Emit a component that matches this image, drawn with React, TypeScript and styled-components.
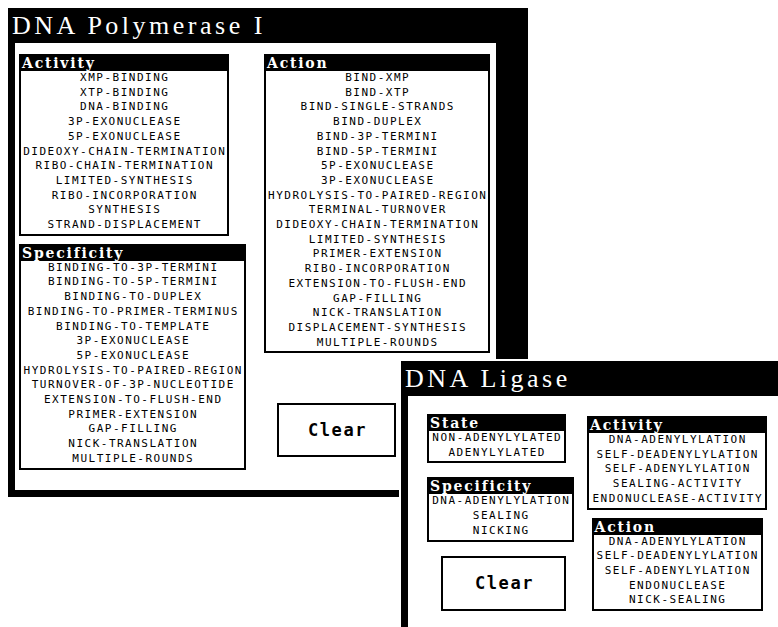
import styled, { createGlobalStyle } from 'styled-components';

const GlobalStyle = createGlobalStyle`
  html, body {
    margin: 0;
    padding: 0;
    background: #fff;
  }
`;

const Desktop = styled.div`
  position: relative;
  width: 778px;
  height: 627px;
  overflow: hidden;
  background: #fff;
`;

const Window = styled.div<{ $left: number; $top: number; $width: number; $height: number; $framed?: boolean }>`
  position: absolute;
  left: ${(p) => p.$left}px;
  top: ${(p) => p.$top}px;
  width: ${(p) => p.$width}px;
  height: ${(p) => p.$height}px;
  display: flex;
  flex-direction: column;
  background: #000;
  border: ${(p) => (p.$framed ? '2px solid #fff' : 'none')};
`;

const TitleBar = styled.div`
  height: 35px;
  flex: none;
  padding-left: 4px;
  color: #fff;
  font-family: 'Liberation Serif', 'DejaVu Serif', serif;
  font-size: 26px;
  line-height: 35px;
  letter-spacing: 3.5px;
  white-space: nowrap;
`;

const Body = styled.div<{ $right: number; $bottom: number; $padTop: number; $padLeft: number; $gap: number }>`
  flex: 1;
  display: flex;
  align-items: flex-start;
  gap: ${(p) => p.$gap}px;
  margin: 0 ${(p) => p.$right}px ${(p) => p.$bottom}px 7px;
  padding: ${(p) => p.$padTop}px 0 0 ${(p) => p.$padLeft}px;
  background: #fff;
`;

const Column = styled.div<{ $gap: number; $center?: boolean; $offset?: number }>`
  display: flex;
  flex-direction: column;
  align-items: ${(p) => (p.$center ? 'center' : 'flex-start')};
  gap: ${(p) => p.$gap}px;
  margin-top: ${(p) => p.$offset ?? 0}px;
`;

const Box = styled.div<{ $width: number }>`
  width: ${(p) => p.$width}px;
  box-sizing: border-box;
  border: 2px solid #000;
  background: #fff;
`;

const BoxHeader = styled.div`
  height: 15px;
  padding-left: 1px;
  background: #000;
  color: #fff;
  font-family: 'DejaVu Serif', 'Liberation Serif', serif;
  font-weight: bold;
  font-size: 14px;
  line-height: 14px;
  letter-spacing: 1.8px;
  white-space: nowrap;
`;

const ItemList = styled.ul`
  list-style: none;
  margin: 0;
  padding: 0 0 1px;
`;

const Item = styled.li`
  padding-left: 1.5px;
  color: #000;
  font-family: 'DejaVu Sans Mono', monospace;
  font-size: 11px;
  line-height: 14.7px;
  letter-spacing: 1.5px;
  text-align: center;
  white-space: nowrap;
`;

const ClearButton = styled.button<{ $width: number; $height: number; $indent: number; $lift?: number }>`
  width: ${(p) => p.$width}px;
  height: ${(p) => p.$height}px;
  margin-left: ${(p) => p.$indent}px;
  margin-top: ${(p) => p.$lift ?? 0}px;
  box-sizing: border-box;
  border: 2px solid #000;
  border-radius: 0;
  background: #fff;
  color: #000;
  padding: 0 0 0 2px;
  font-family: 'DejaVu Sans Mono', monospace;
  font-weight: bold;
  font-size: 17px;
  letter-spacing: 1.6px;
  cursor: pointer;
`;

interface ListProps {
  title: string;
  items: string[];
  width: number;
}

const ListBox = ({ title, items, width }: ListProps) => (
  <Box $width={width}>
    <BoxHeader>{title}</BoxHeader>
    <ItemList>
      {items.map((item) => (
        <Item key={item}>{item}</Item>
      ))}
    </ItemList>
  </Box>
);

const polymerase = {
  activity: [
    'XMP-BINDING',
    'XTP-BINDING',
    'DNA-BINDING',
    '3P-EXONUCLEASE',
    '5P-EXONUCLEASE',
    'DIDEOXY-CHAIN-TERMINATION',
    'RIBO-CHAIN-TERMINATION',
    'LIMITED-SYNTHESIS',
    'RIBO-INCORPORATION',
    'SYNTHESIS',
    'STRAND-DISPLACEMENT',
  ],
  specificity: [
    'BINDING-TO-3P-TERMINI',
    'BINDING-TO-5P-TERMINI',
    'BINDING-TO-DUPLEX',
    'BINDING-TO-PRIMER-TERMINUS',
    'BINDING-TO-TEMPLATE',
    '3P-EXONUCLEASE',
    '5P-EXONUCLEASE',
    'HYDROLYSIS-TO-PAIRED-REGION',
    'TURNOVER-OF-3P-NUCLEOTIDE',
    'EXTENSION-TO-FLUSH-END',
    'PRIMER-EXTENSION',
    'GAP-FILLING',
    'NICK-TRANSLATION',
    'MULTIPLE-ROUNDS',
  ],
  action: [
    'BIND-XMP',
    'BIND-XTP',
    'BIND-SINGLE-STRANDS',
    'BIND-DUPLEX',
    'BIND-3P-TERMINI',
    'BIND-5P-TERMINI',
    '5P-EXONUCLEASE',
    '3P-EXONUCLEASE',
    'HYDROLYSIS-TO-PAIRED-REGION',
    'TERMINAL-TURNOVER',
    'DIDEOXY-CHAIN-TERMINATION',
    'LIMITED-SYNTHESIS',
    'PRIMER-EXTENSION',
    'RIBO-INCORPORATION',
    'EXTENSION-TO-FLUSH-END',
    'GAP-FILLING',
    'NICK-TRANSLATION',
    'DISPLACEMENT-SYNTHESIS',
    'MULTIPLE-ROUNDS',
  ],
};

const ligase = {
  state: ['NON-ADENYLYLATED', 'ADENYLYLATED'],
  specificity: ['DNA-ADENYLYLATION', 'SEALING', 'NICKING'],
  activity: [
    'DNA-ADENYLYLATION',
    'SELF-DEADENYLYLATION',
    'SELF-ADENYLYLATION',
    'SEALING-ACTIVITY',
    'ENDONUCLEASE-ACTIVITY',
  ],
  action: [
    'DNA-ADENYLYLATION',
    'SELF-DEADENYLYLATION',
    'SELF-ADENYLYLATION',
    'ENDONUCLEASE',
    'NICK-SEALING',
  ],
};

export default function App() {
  return (
    <>
      <GlobalStyle />
      <Desktop>
        <Window $left={8} $top={8} $width={520} $height={489}>
          <TitleBar>DNA Polymerase I</TitleBar>
          <Body $right={32} $bottom={7} $padTop={11} $padLeft={4} $gap={18}>
            <Column $gap={8}>
              <ListBox title="Activity" items={polymerase.activity} width={210} />
              <ListBox title="Specificity" items={polymerase.specificity} width={227} />
            </Column>
            <Column $gap={0}>
              <ListBox title="Action" items={polymerase.action} width={226} />
              <ClearButton $width={119} $height={54} $indent={13} $lift={50}>
                Clear
              </ClearButton>
            </Column>
          </Body>
        </Window>

        <Window $left={399} $top={359} $width={400} $height={290} $framed>
          <TitleBar>DNA Ligase</TitleBar>
          <Body $right={0} $bottom={0} $padTop={18} $padLeft={19} $gap={13}>
            <Column $gap={14}>
              <ListBox title="State" items={ligase.state} width={139} />
              <ListBox title="Specificity" items={ligase.specificity} width={147} />
              <ClearButton $width={125} $height={55} $indent={14}>
                Clear
              </ClearButton>
            </Column>
            <Column $gap={8} $center $offset={2}>
              <ListBox title="Activity" items={ligase.activity} width={180} />
              <ListBox title="Action" items={ligase.action} width={171} />
            </Column>
          </Body>
        </Window>
      </Desktop>
    </>
  );
}
